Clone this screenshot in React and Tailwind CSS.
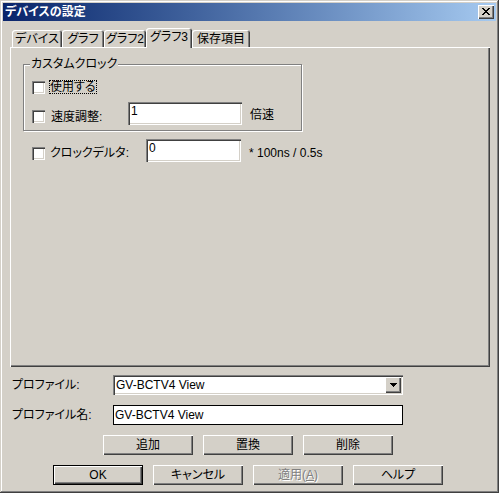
import React from "react";

const raised = "shadow-[inset_1px_1px_#ffffff,inset_-1px_-1px_#404040,inset_-2px_-2px_#808080]";
const sunken = "shadow-[inset_1px_1px_#808080,inset_2px_2px_#404040,inset_-1px_-1px_#ffffff,inset_-2px_-2px_#d4d0c8]";

function Check() {
  return <div className={`w-[13px] h-[13px] bg-white shrink-0 ${sunken}`} />;
}

function Tab({ label, w, selected }) {
  if (selected) {
    return (
      <div
        className={`relative z-10 h-[20px] -mb-[1px] bg-[#d4d0c8] rounded-t-[3px] flex justify-center pt-[2px] text-[12px] leading-[14px] shadow-[inset_1px_1px_#ffffff,inset_-1px_0_#404040,inset_-2px_0_#808080]`}
        style={{ width: w }}
      >
        {label}
      </div>
    );
  }
  return (
    <div
      className="h-[17px] bg-[#d4d0c8] rounded-t-[3px] flex justify-center pt-[2px] text-[12px] leading-[14px] shadow-[inset_1px_1px_#ffffff,inset_-1px_0_#404040,inset_-2px_0_#808080]"
      style={{ width: w }}
    >
      {label}
    </div>
  );
}

function Btn({ children, def, disabled }) {
  if (def) {
    return (
      <div className="w-[90px] h-[20px] border border-black">
        <div className={`w-full h-full flex items-center justify-center text-[12px] leading-[14px] ${raised}`}>{children}</div>
      </div>
    );
  }
  return (
    <div
      className={`w-[90px] h-[20px] flex items-center justify-center text-[12px] leading-[14px] ${raised} ${disabled ? "text-[#808080] [text-shadow:1px_1px_0_#ffffff]" : ""}`}
    >
      {children}
    </div>
  );
}

export default function App() {
  return (
    <div
      className="w-[499px] h-[493px] bg-[#d4d0c8] p-[3px] flex flex-col text-black shadow-[inset_-1px_-1px_#404040,inset_1px_1px_#d4d0c8,inset_-2px_-2px_#808080,inset_2px_2px_#ffffff] [font-feature-settings:'palt']"
      style={{ fontFamily: "'Liberation Sans', 'Noto Sans CJK JP', sans-serif" }}
    >
      {/* Title bar */}
      <div className="h-[18px] flex items-center bg-gradient-to-r from-[#0a246a] to-[#a6caf0] pl-[2px] pr-[2px] shrink-0">
        <span className="text-white font-bold text-[12px] leading-[14px]">デバイスの設定</span>
        <div className={`ml-auto w-[16px] h-[14px] bg-[#d4d0c8] flex items-center justify-center ${raised}`}>
          <svg width="8" height="7" viewBox="0 0 8 7" className="-mt-[1px]">
            <path d="M0 0h2v1h1v1h2V1h1V0h2v1H7v1H6v1H5v1h1v1h1v1h1v1H6V6H5V5H3v1H2v1H0V6h1V5h1V4h1V3H2V2H1V1H0z" fill="#000" />
          </svg>
        </div>
      </div>

      {/* Tabs */}
      <div className="mt-[7px] h-[19px] flex items-end pl-[9px] shrink-0">
        <Tab label="デバイス" w={50} />
        <Tab label="グラフ" w={42} />
        <Tab label="グラフ2" w={42} />
        <Tab label="グラフ3" w={46} selected />
        <Tab label="保存項目" w={58} />
      </div>

      {/* Panel */}
      <div className="ml-[7px] w-[480px] h-[320px] shrink-0 pt-[11px] pl-[13px] shadow-[inset_1px_1px_#ffffff,inset_-1px_-1px_#404040,inset_-2px_-2px_#808080]">
        <fieldset className="w-[279px] h-[73px] border border-[#808080] shadow-[1px_1px_0_#ffffff,inset_1px_1px_0_#ffffff]">
          <legend className="ml-[6px] px-[1px] bg-[#d4d0c8] text-[12px] leading-[13px]">カスタムクロック</legend>
          <div className="mt-[7px] h-[18px] flex items-center pl-[8px]">
            <Check />
            <span className="ml-[4px] h-[14px] px-[1px] outline outline-1 outline-dotted outline-black -outline-offset-1 text-[12px] leading-[14px]">
              使用する
            </span>
          </div>
          <div className="mt-[6px] h-[23px] flex items-start pl-[8px]">
            <div className="mt-[8px]">
              <Check />
            </div>
            <div className="w-[83px] pl-[6px] mt-[8px] text-[12px] leading-[14px]">速度調整:</div>
            <div className={`w-[114px] h-[23px] bg-white pl-[3px] pt-[2px] text-[12px] leading-[14px] ${sunken}`}>1</div>
            <div className="ml-[8px] mt-[6px] text-[12px] leading-[14px]">倍速</div>
          </div>
        </fieldset>

        <div className="mt-[8px] h-[23px] flex items-start pl-[9px]">
          <div className="mt-[8px]">
            <Check />
          </div>
          <div className="w-[101px] pl-[5px] mt-[7px] text-[12px] leading-[14px]">クロックデルタ:</div>
          <div className={`w-[95px] h-[23px] bg-white pl-[3px] pt-[2px] text-[12px] leading-[14px] ${sunken}`}>0</div>
          <div className="ml-[8px] mt-[7px] text-[12px] leading-[14px]">* 100ns / 0.5s</div>
        </div>
      </div>

      {/* Profile row */}
      <div className="mt-[8px] h-[20px] flex items-center pl-[9px] shrink-0">
        <div className="w-[101px] text-[12px] leading-[14px]">プロファイル:</div>
        <div className={`w-[290px] h-[20px] bg-white flex items-center p-[2px] ${sunken}`}>
          <span className="pl-[1px] text-[12px] leading-[14px] flex-1">GV-BCTV4 View</span>
          <div className={`w-[16px] h-[16px] bg-[#d4d0c8] flex items-center justify-center ${raised}`}>
            <svg width="7" height="4" viewBox="0 0 7 4">
              <path d="M0 0h7v1H6v1H5v1H4v1H3V3H2V2H1V1H0z" fill="#000" />
            </svg>
          </div>
        </div>
      </div>

      <div className="mt-[10px] h-[20px] flex items-center pl-[9px] shrink-0">
        <div className="w-[101px] text-[12px] leading-[14px]">プロファイル名:</div>
        <div className="w-[290px] h-[20px] bg-white border border-black flex items-center pl-[1px] text-[12px] leading-[14px]">
          GV-BCTV4 View
        </div>
      </div>

      <div className="mt-[10px] flex gap-[10px] pl-[100px] shrink-0">
        <Btn>追加</Btn>
        <Btn>置換</Btn>
        <Btn>削除</Btn>
      </div>

      <div className="mt-[10px] flex gap-[10px] pl-[50px] shrink-0">
        <Btn def>OK</Btn>
        <Btn>キャンセル</Btn>
        <Btn disabled>
          適用(<span className="underline">A</span>)
        </Btn>
        <Btn>ヘルプ</Btn>
      </div>
    </div>
  );
}
